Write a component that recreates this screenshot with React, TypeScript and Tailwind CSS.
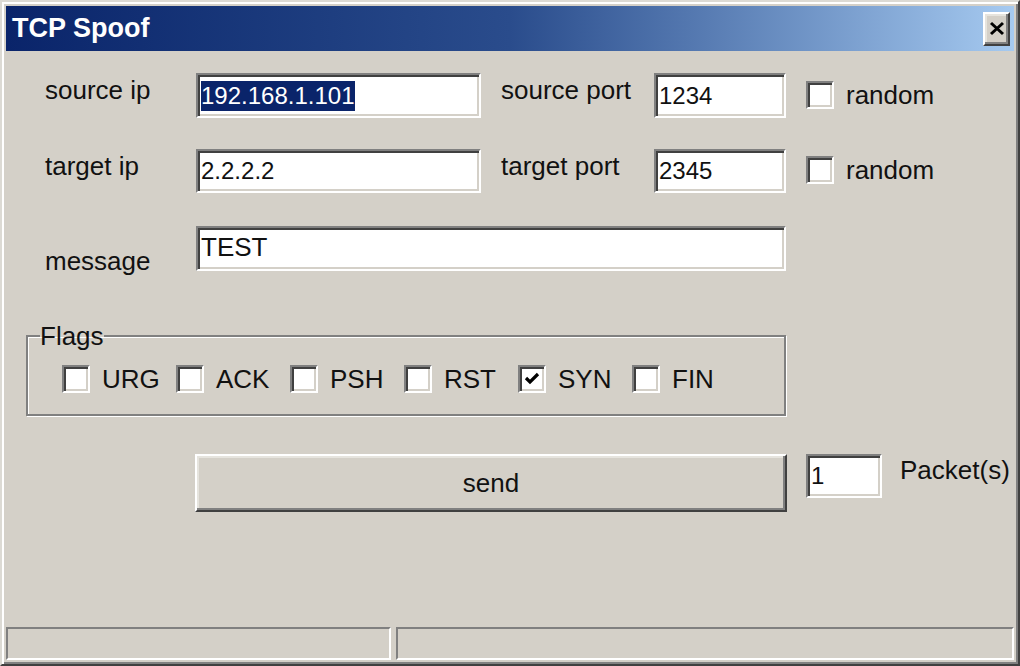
import React from "react";

const sunken =
  "border-2 border-t-[#808080] border-l-[#808080] border-r-white border-b-white shadow-[inset_2px_2px_0_#404040,inset_-2px_-2px_0_#d4d0c8] bg-white";
const raised =
  "border-2 border-t-white border-l-white border-r-[#404040] border-b-[#404040] shadow-[inset_-2px_-2px_0_#808080,inset_2px_2px_0_#e6e4de] bg-[#d4d0c8]";

const CheckBox: React.FC<{ checked?: boolean }> = ({ checked }) => (
  <div className={`w-[28px] h-[28px] shrink-0 flex items-center justify-center ${sunken}`}>
    {checked && (
      <svg width="16" height="14" viewBox="0 0 16 14">
        <path d="M2 6 L6 10 L14 2" stroke="#000" strokeWidth="3.2" fill="none" />
      </svg>
    )}
  </div>
);

const Field: React.FC<{ w: string; children: React.ReactNode; h?: string }> = ({
  w,
  children,
  h = "h-[45px]",
}) => (
  <div className={`${w} ${h} shrink-0 flex items-center pl-[3px] ${sunken}`}>{children}</div>
);

const flags = [
  { name: "URG", on: false },
  { name: "ACK", on: false },
  { name: "PSH", on: false },
  { name: "RST", on: false },
  { name: "SYN", on: true },
  { name: "FIN", on: false },
];

export default function App() {
  return (
    <div className="w-[1020px] h-[666px] bg-[#d4d0c8] border-2 border-t-[#dcdad4] border-l-[#dcdad4] border-r-[#404040] border-b-[#404040] shadow-[inset_2px_2px_0_#fff,inset_-2px_-2px_0_#808080] p-[4px] flex flex-col font-['Liberation_Sans',Arial,sans-serif] text-[#111] overflow-hidden">
      {/* title bar */}
      <div className="h-[45px] shrink-0 flex items-center justify-between bg-gradient-to-r from-[#0a246a] via-[#2a4c8c] to-[#a6caf0] pl-[6px] pr-[4px]">
        <span className="text-white font-bold text-[27px] leading-none">TCP Spoof</span>
        <div className={`w-[27px] h-[34px] flex items-center justify-center ${raised}`}>
          <svg width="16" height="15" viewBox="0 0 16 15">
            <path d="M2 2 L14 13 M14 2 L2 13" stroke="#000" strokeWidth="3" />
          </svg>
        </div>
      </div>

      <div className="flex-1 flex flex-col pt-[22px]">
        {/* source row */}
        <div className="flex items-start pl-[39px]">
          <div className="w-[151px] pt-[2px] text-[26px] leading-[30px]">source ip</div>
          <Field w="w-[285px]">
            <span className="bg-[#0a246a] text-white text-[24px] leading-[30px] pr-[1px]">192.168.1.101</span>
          </Field>
          <div className="w-[153px] ml-[20px] pt-[2px] text-[26px] leading-[30px]">source port</div>
          <Field w="w-[132px]">
            <span className="text-[24px] leading-[30px]">1234</span>
          </Field>
          <div className="ml-[20px] mt-[7px] flex items-center">
            <CheckBox />
            <span className="ml-[12px] text-[26px] leading-[30px]">random</span>
          </div>
        </div>

        {/* target row */}
        <div className="flex items-start pl-[39px] mt-[31px]">
          <div className="w-[151px] pt-[2px] text-[26px] leading-[30px]">target ip</div>
          <Field w="w-[285px]" h="h-[44px]">
            <span className="text-[24px] leading-[30px]">2.2.2.2</span>
          </Field>
          <div className="w-[153px] ml-[20px] pt-[2px] text-[26px] leading-[30px]">target port</div>
          <Field w="w-[132px]" h="h-[44px]">
            <span className="text-[24px] leading-[30px]">2345</span>
          </Field>
          <div className="ml-[20px] mt-[6px] flex items-center">
            <CheckBox />
            <span className="ml-[12px] text-[26px] leading-[30px]">random</span>
          </div>
        </div>

        {/* message row */}
        <div className="flex items-start pl-[39px] mt-[33px]">
          <div className="w-[151px] pt-[20px] text-[26px] leading-[30px]">message</div>
          <div className={`w-[590px] h-[45px] flex items-start pl-[3px] pt-[4px] ${sunken}`}>
            <span className="text-[26px] leading-[30px]">TEST</span>
          </div>
        </div>

        {/* flags group */}
        <fieldset className="ml-[20px] mt-[48px] w-[760px] border-2 border-[#808080] shadow-[inset_1px_1px_0_#fff,1px_1px_0_#fff] px-[12px] pb-[20px]">
          <legend className="text-[26px] leading-[24px] px-0">Flags</legend>
          <div className="flex pl-[22px] pt-[16px]">
            {flags.map((f) => (
              <div key={f.name} className="w-[114px] flex items-center">
                <CheckBox checked={f.on} />
                <span className="ml-[12px] text-[26px] leading-[30px]">{f.name}</span>
              </div>
            ))}
          </div>
        </fieldset>

        {/* send row */}
        <div className="flex items-start pl-[189px] mt-[38px]">
          <div className={`w-[592px] h-[58px] flex items-center justify-center text-[26px] ${raised}`}>
            send
          </div>
          <Field w="w-[76px] ml-[19px]" h="h-[44px]">
            <span className="text-[24px] leading-[30px]">1</span>
          </Field>
          <div className="ml-[18px] pt-[1px] text-[26px] leading-[30px]">Packet(s)</div>
        </div>

        {/* status bar */}
        <div className="mt-auto flex gap-[5px] h-[33px]">
          <div className="w-[385px] border-2 border-t-[#808080] border-l-[#808080] border-r-white border-b-white" />
          <div className="flex-1 border-2 border-t-[#808080] border-l-[#808080] border-r-white border-b-white" />
        </div>
      </div>
    </div>
  );
}
